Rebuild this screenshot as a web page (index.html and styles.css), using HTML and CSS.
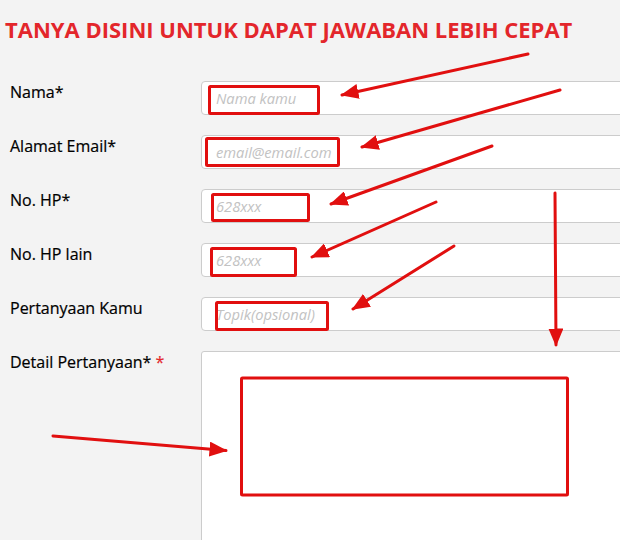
FILE: index.html
```html
<!DOCTYPE html>
<html lang="id">
<head>
<meta charset="utf-8">
<title>Tanya</title>
<link rel="stylesheet" href="styles.css">
</head>
<body>
<div class="page">
  <h1 class="title">TANYA DISINI UNTUK DAPAT JAWABAN LEBIH CEPAT</h1>
  <form class="form">
    <div class="row">
      <label class="label">Nama*</label>
      <input class="field" type="text" placeholder="Nama kamu">
    </div>
    <div class="row">
      <label class="label">Alamat Email*</label>
      <input class="field" type="text" placeholder="email@email.com">
    </div>
    <div class="row">
      <label class="label">No. HP*</label>
      <input class="field" type="text" placeholder="628xxx">
    </div>
    <div class="row">
      <label class="label">No. HP lain</label>
      <input class="field" type="text" placeholder="628xxx">
    </div>
    <div class="row">
      <label class="label">Pertanyaan Kamu</label>
      <input class="field" type="text" placeholder="Topik(opsional)">
    </div>
    <div class="row">
      <label class="label">Detail Pertanyaan* <span class="req">*</span></label>
      <textarea class="area"></textarea>
    </div>
  </form>
  <svg class="marks" width="620" height="540" viewBox="0 0 620 540">
    <defs>
      <marker id="ah" markerWidth="6" markerHeight="5" refX="5.5" refY="2.5" orient="auto" markerUnits="strokeWidth">
        <path d="M0,0 L6,2.5 L0,5 Z" fill="#e10f0f"/>
      </marker>
    </defs>
    <g fill="none" stroke="#e10f0f" stroke-width="3">
      <rect x="209.5" y="86.5" width="109" height="27" rx="1"/>
      <rect x="206.5" y="138.5" width="132" height="27" rx="1"/>
      <rect x="212.5" y="194.5" width="96" height="26" rx="1"/>
      <rect x="211.5" y="248.5" width="84" height="27" rx="1"/>
      <rect x="216.5" y="302.5" width="111" height="27" rx="1"/>
      <rect x="241.5" y="378" width="326" height="117" rx="1"/>
      <g stroke-linecap="round" marker-end="url(#ah)">
        <line x1="528" y1="54" x2="342" y2="95"/>
        <line x1="560" y1="90" x2="362" y2="147"/>
        <line x1="492" y1="146" x2="331" y2="204"/>
        <line x1="436" y1="202" x2="312" y2="257"/>
        <line x1="454" y1="246" x2="353" y2="309"/>
        <line x1="555" y1="193" x2="556" y2="345"/>
        <line x1="53" y1="436" x2="226" y2="450.5"/>
      </g>
    </g>
  </svg>
</div>
</body>
</html>
```
FILE: styles.css
```css
html, body {
  margin: 0;
  padding: 0;
}
body {
  background: #f3f3f3;
  font-family: "Open Sans", "DejaVu Sans", sans-serif;
  overflow: hidden;
  width: 620px;
  height: 540px;
}
.page {
  position: relative;
  width: 620px;
  height: 540px;
  overflow: hidden;
}
.title {
  margin: 0;
  padding: 14.5px 0 0 5px;
  font-size: 22px;
  line-height: 28px;
  font-weight: 700;
  color: #e3262b;
  white-space: nowrap;
}
.form {
  display: flex;
  flex-direction: column;
  gap: 20px;
  padding: 38.5px 0 0 10px;
}
.row {
  display: grid;
  grid-template-columns: 191px 440px;
  align-items: start;
}
.label {
  font-size: 16px;
  line-height: 22px;
  font-weight: 400;
  color: #000;
  white-space: nowrap;
  -webkit-text-stroke: 0.2px #000;
}
.req {
  color: #e3262b;
  -webkit-text-stroke: 0.2px #e3262b;
}
.field {
  box-sizing: border-box;
  height: 34px;
  width: 440px;
  margin: 0;
  padding: 0 14px;
  border: 1px solid #cccccc;
  border-radius: 4px;
  background: #fff;
  font-family: "Open Sans", sans-serif;
  font-size: 14.7px;
  font-style: italic;
  outline: none;
}
.field::placeholder {
  color: #c2c2c2;
  font-style: italic;
}
.area {
  box-sizing: border-box;
  display: block;
  width: 440px;
  height: 220px;
  margin: 0;
  border: 1px solid #cccccc;
  border-radius: 3px;
  background: #fff;
  resize: none;
  outline: none;
}
.marks {
  position: absolute;
  left: 0;
  top: 0;
  pointer-events: none;
}
```
